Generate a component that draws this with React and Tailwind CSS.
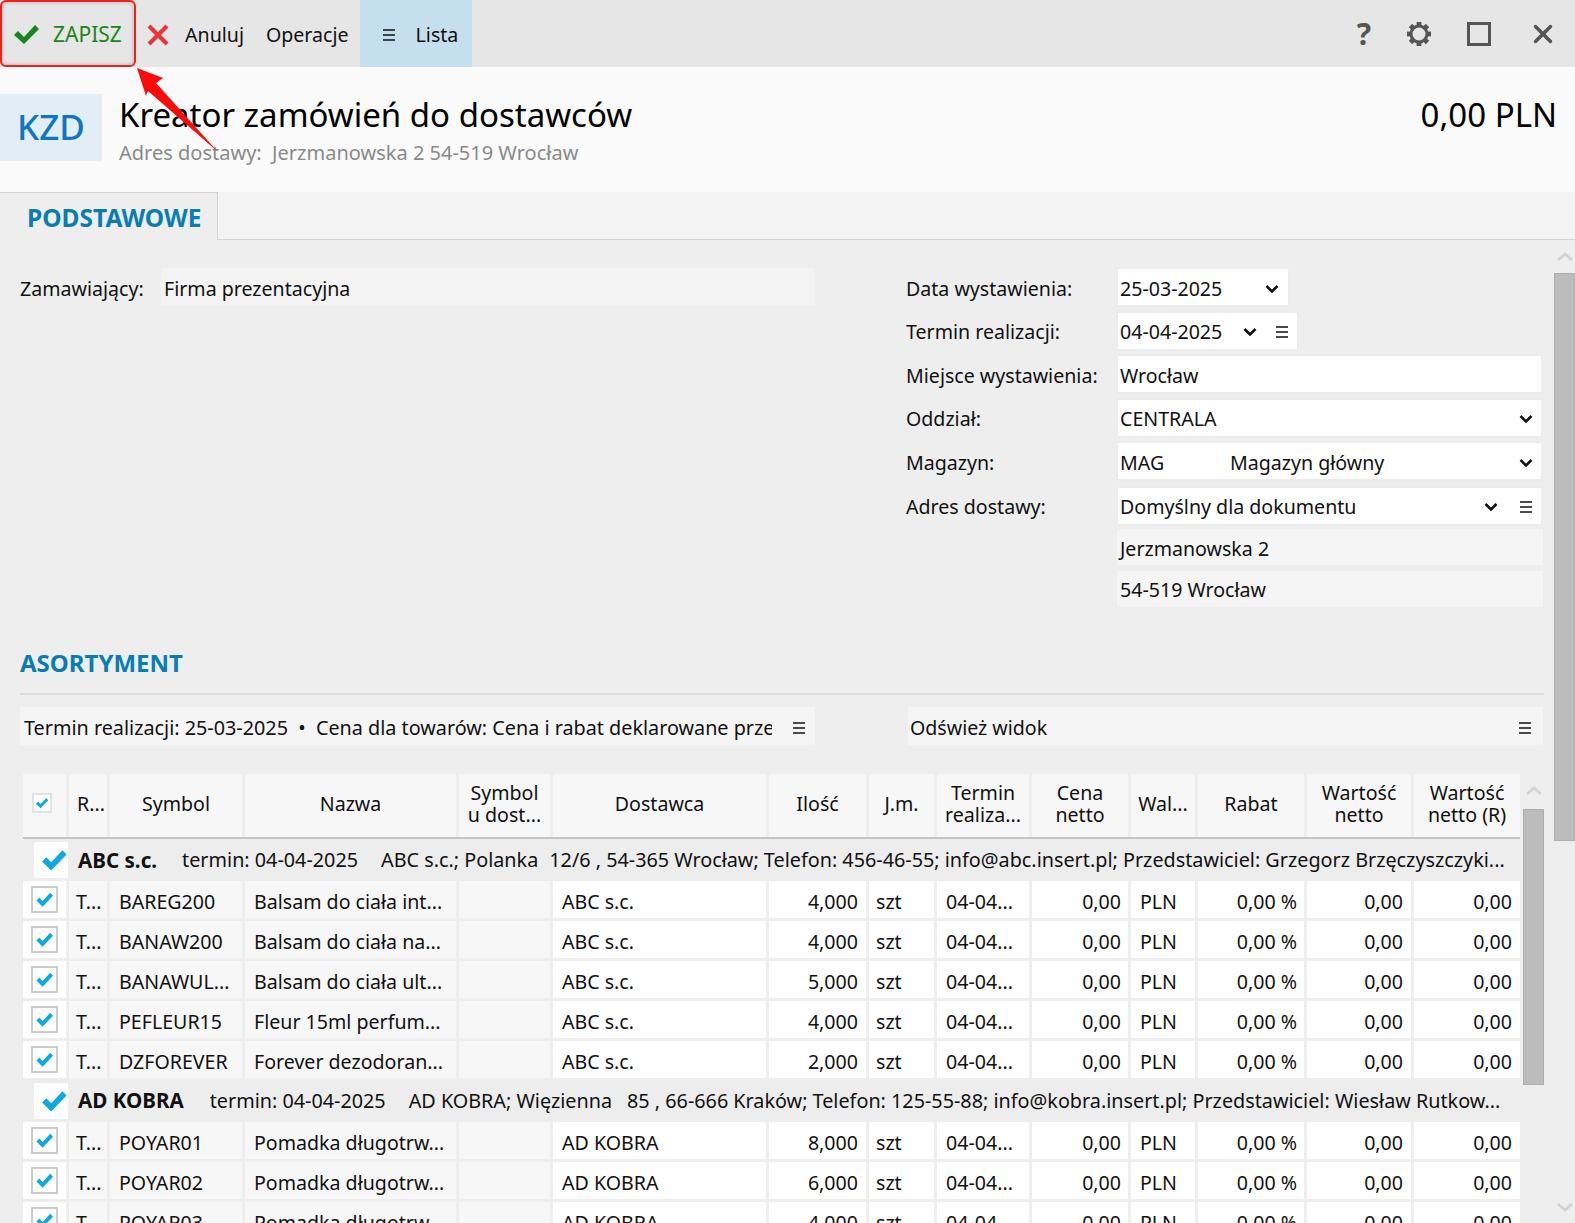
import { X } from 'lucide-react'

const kolommen = 'grid grid-cols-[43px_38px_132px_211px_91px_213px_97px_65px_92px_96px_64px_106px_104px_106px] gap-x-[3px]'

// Hamburger menu icoon
function Menu({ className = '' }) {
  return (
    <svg width="14" height="14" viewBox="0 0 14 14" className={className}>
      <path d="M1 2h12M1 7h12M1 12h12" stroke="#111" strokeWidth="1.6" />
    </svg>
  )
}

function Chevron({ className = '' }) {
  return (
    <svg width="14" height="10" viewBox="0 0 14 10" className={className}>
      <path d="M1.5 2l5.5 5.5L12.5 2" fill="none" stroke="#111" strokeWidth="2.6" />
    </svg>
  )
}

function Vink({ size = 20, className = '' }) {
  return (
    <svg width={size} height={size} viewBox="0 0 20 20" className={className}>
      <path d="M1.5 11l3-3 3.5 3.6L16 3l3 3-11 11.5z" fill="#0ea9e0" />
    </svg>
  )
}

// Tandwiel met acht tanden
function Tandwiel() {
  return (
    <svg width="28" height="28" viewBox="0 0 28 28" className="mr-[34px]">
      {[0, 45, 90, 135, 180, 225, 270, 315].map((hoek) => (
        <rect key={hoek} x="11.6" y="2" width="4.8" height="4.5" fill="#555" transform={`rotate(${hoek} 14 14)`} />
      ))}
      <circle cx="14" cy="14" r="8" fill="none" stroke="#555" strokeWidth="3" />
    </svg>
  )
}

function Rij({ label, children, className = '' }) {
  return (
    <div className={`flex items-center h-[40px] ${className}`}>
      <div className="w-[210px] shrink-0 pt-[3px]">{label}</div>
      {children}
    </div>
  )
}

function Veld({ children, className = 'w-[427px]' }) {
  return (
    <div className={`h-[40px] bg-white border-2 border-[#ececec] flex items-center pt-[3px] pl-[2px] pr-[8px] ${className}`}>
      {children}
    </div>
  )
}

function GroepRij({ naam, termin, adres, rest, className = 'h-[42px]', afstand = ['ml-[25px]', 'ml-[23px]', 'ml-[11px]'] }) {
  return (
    <div className={`flex items-center bg-[#ededed] w-[1497px] whitespace-nowrap overflow-hidden text-[19.8px] ${className}`}>
      <div className="ml-[11px] w-[34px] h-[36px] bg-white flex items-center justify-center shrink-0">
        <Vink size={28} className="ml-[6px]" />
      </div>
      <span className="font-bold text-[20.6px] ml-[10px]">{naam}</span>
      <span className={afstand[0]}>{termin}</span>
      <span className={afstand[1]}>{adres}</span>
      <span className={afstand[2]}>{rest}</span>
    </div>
  )
}

function TowarRij({ symbol, nazwa, dostawca, ilosc }) {
  const wit = 'bg-white h-full flex items-center pt-[4px]'
  const grijs = 'bg-[#f7f7f7] h-full flex items-center pt-[4px]'
  return (
    <div className={`${kolommen} h-[37px] mb-[3px] whitespace-nowrap`}>
      <div className="bg-white h-full flex items-center justify-center">
        <div className="w-[27px] h-[27px] border-2 border-[#cccccc] flex items-center justify-center">
          <Vink size={19} />
        </div>
      </div>
      <div className={`${grijs} pl-[7px]`}>T...</div>
      <div className={`${grijs} pl-[9px]`}>{symbol}</div>
      <div className={`${grijs} pl-[9px]`}>{nazwa}</div>
      <div className={grijs}></div>
      <div className={`${wit} pl-[9px]`}>{dostawca}</div>
      <div className={`${wit} justify-end pr-[8px]`}>{ilosc}</div>
      <div className={`${wit} pl-[7px]`}>szt</div>
      <div className={`${wit} pl-[9px]`}>04-04...</div>
      <div className={`${wit} justify-end pr-[7px]`}>0,00</div>
      <div className={`${wit} pl-[9px]`}>PLN</div>
      <div className={`${wit} justify-end pr-[7px]`}>0,00 %</div>
      <div className={`${wit} justify-end pr-[8px]`}>0,00</div>
      <div className={`${wit} justify-end pr-[8px]`}>0,00</div>
    </div>
  )
}

function Kop({ children, className = '' }) {
  return (
    <div className={`bg-[#f7f7f7] h-full flex items-center justify-center text-center leading-[22px] pb-[3px] ${className}`}>
      {children}
    </div>
  )
}

export default function App() {
  return (
    <div className="relative h-[1223px] w-[1575px] overflow-hidden bg-[#eeeeee] text-[19.6px] text-[#111] font-['Noto_Sans',sans-serif]">
      {/* Werkbalk */}
      <div className="h-[67px] bg-[#e6e6e6] flex items-stretch">
        <div className="w-[136px] h-[67px] border-2 border-[#f02020] rounded-[6px] flex items-center pl-[10px] shadow-[inset_0_0_4px_rgba(0,0,0,0.25)]">
          <svg width="28" height="22" viewBox="0 0 28 22">
            <path d="M2 12l4-4 6 6L23 2l4 4-15 15z" fill="#17861f" />
          </svg>
          <span className="ml-[13px] text-[21px] text-[#1c851c] pt-[2px]">ZAPISZ</span>
        </div>
        <div className="flex items-center ml-[10px] pt-[2px]">
          <svg width="24" height="24" viewBox="0 0 24 24">
            <path d="M3 3l18 18M21 3L3 21" stroke="#e8343c" strokeWidth="4.2" />
          </svg>
          <span className="ml-[15px]">Anuluj</span>
          <span className="ml-[22px]">Operacje</span>
        </div>
        <div className="ml-[11px] w-[112px] bg-[#c5dfef] flex items-center pl-[22px] pt-[2px]">
          <Menu />
          <span className="ml-[20px]">Lista</span>
        </div>
        <div className="ml-auto flex items-center text-[#555]">
          <span className="font-bold text-[30px] mr-[34px]">?</span>
          <Tandwiel />
          <div className="w-[24px] h-[24px] border-[3px] border-[#555] mr-[37px]"></div>
          <X size={30} strokeWidth={2.8} className="mr-[17px]" />
        </div>
      </div>

      {/* Kop van het document */}
      <div className="h-[125px] bg-[#fafafa] flex pt-[27px]">
        <div className="w-[102px] h-[67px] bg-[#e3edf5] flex items-center justify-center font-medium text-[#0f77bd] text-[35px]">KZD</div>
        <div className="ml-[17px] -mt-[1px]">
          <div className="text-[33px] leading-[44px] text-black">Kreator zamówień do dostawców</div>
          <div className="text-[20px] text-[#8a8a8a] leading-[28px] mt-[2px]">Adres dostawy:&nbsp; Jerzmanowska 2 54-519 Wrocław</div>
        </div>
        <div className="ml-auto mr-[18px] -mt-[1px] text-[33px] leading-[44px] text-black">0,00 PLN</div>
      </div>

      {/* Tabbladen */}
      <div className="h-[48px] bg-[#f3f3f3] border-b border-[#d4d4d4]">
        <div className="w-[218px] h-[48px] bg-[#eeeeee] border-t border-r border-[#d4d4d4] flex items-center pl-[27px] pt-[4px] font-bold text-[24.5px] text-[#0a7db0]">
          PODSTAWOWE
        </div>
      </div>

      <div className="flex">
        <div className="w-[1554px] pl-[20px]">
          {/* Formulier */}
          <div className="flex pt-[27px] h-[368px]">
            <div className="w-[795px] flex items-start mt-[1px]">
              <div className="w-[141px] h-[38px] flex items-center pt-[3px]">Zamawiający:</div>
              <div className="w-[654px] h-[38px] bg-[#f3f3f3] flex items-center pl-[3px] pt-[3px]">Firma prezentacyjna</div>
            </div>
            <div className="ml-[91px] w-[637px] flex flex-col gap-y-[3.5px]">
              <Rij label="Data wystawienia:">
                <Veld className="w-[174px] justify-between">25-03-2025<Chevron className="mr-[1px]" /></Veld>
              </Rij>
              <Rij label="Termin realizacji:">
                <Veld className="w-[183px] justify-between">04-04-2025<Chevron className="ml-[2px]" /><Menu /></Veld>
              </Rij>
              <Rij label="Miejsce wystawienia:">
                <Veld>Wrocław</Veld>
              </Rij>
              <Rij label="Oddział:">
                <Veld className="w-[427px] justify-between">CENTRALA<Chevron /></Veld>
              </Rij>
              <Rij label="Magazyn:">
                <Veld className="w-[427px]">
                  <span className="w-[110px]">MAG</span>
                  <span>Magazyn główny</span>
                  <Chevron className="ml-auto" />
                </Veld>
              </Rij>
              <Rij label="Adres dostawy:" className="mt-[1px]">
                <Veld className="w-[427px]">
                  Domyślny dla dokumentu
                  <Chevron className="ml-auto mr-[21px]" />
                  <Menu />
                </Veld>
              </Rij>
              <div className="ml-[211px] w-[426px] h-[36px] bg-[#f5f5f5] flex items-center pl-[3px] pt-[4px]">Jerzmanowska 2</div>
              <div className="ml-[211px] mt-[2.5px] w-[426px] h-[36px] bg-[#f5f5f5] flex items-center pl-[3px] pt-[1px]">54-519 Wrocław</div>
            </div>
          </div>

          {/* Asortyment */}
          <div className="h-[87px] mr-[10px] border-b-2 border-[#dcdcdc] flex items-center pt-[24px] font-bold text-[24px] text-[#0a7db0]">
            ASORTYMENT
          </div>
          <div className="flex mt-[12px] h-[38px]">
            <div className="w-[795px] bg-[#f5f5f5] flex items-center pl-[4px] pr-[9px] pt-[4px]">
              <span className="flex-1 whitespace-nowrap overflow-hidden text-[19.8px]">Termin realizacji: 25-03-2025 &nbsp;•&nbsp;&nbsp;Cena dla towarów: Cena i rabat deklarowane prze</span>
              <Menu className="ml-[20px]" />
            </div>
            <div className="ml-[93px] w-[635px] bg-[#f5f5f5] flex items-center pl-[2px] pr-[11px] pt-[4px] justify-between">
              Odśwież widok
              <Menu />
            </div>
          </div>

          {/* Tabel */}
          <div className="mt-[29px] ml-[3px] flex">
            <div className="w-[1497px]">
              <div className={`${kolommen} h-[65px] border-b-2 border-[#c4c4c4]`}>
                <Kop>
                  <div className="w-[20px] h-[20px] bg-white border-2 border-[#e2e2e2] flex items-center justify-center -mt-[3px] -ml-[6px]">
                    <Vink size={14} />
                  </div>
                </Kop>
                <Kop className="justify-start pl-[8px]">R...</Kop>
                <Kop>Symbol</Kop>
                <Kop>Nazwa</Kop>
                <Kop>Symbol<br />u dost...</Kop>
                <Kop>Dostawca</Kop>
                <Kop>Ilość</Kop>
                <Kop>J.m.</Kop>
                <Kop>Termin<br />realiza...</Kop>
                <Kop>Cena<br />netto</Kop>
                <Kop>Wal...</Kop>
                <Kop>Rabat</Kop>
                <Kop>Wartość<br />netto</Kop>
                <Kop>Wartość<br />netto (R)</Kop>
              </div>
              <GroepRij
                naam="ABC s.c."
                termin="termin: 04-04-2025"
                adres="ABC s.c.; Polanka"
                rest="12/6 , 54-365 Wrocław; Telefon: 456-46-55; info@abc.insert.pl; Przedstawiciel: Grzegorz Brzęczyszczyki..."
              />
              <TowarRij symbol="BAREG200" nazwa="Balsam do ciała int..." dostawca="ABC s.c." ilosc="4,000" />
              <TowarRij symbol="BANAW200" nazwa="Balsam do ciała na..." dostawca="ABC s.c." ilosc="4,000" />
              <TowarRij symbol="BANAWUL..." nazwa="Balsam do ciała ult..." dostawca="ABC s.c." ilosc="5,000" />
              <TowarRij symbol="PEFLEUR15" nazwa="Fleur 15ml perfum..." dostawca="ABC s.c." ilosc="4,000" />
              <TowarRij symbol="DZFOREVER" nazwa="Forever dezodoran..." dostawca="ABC s.c." ilosc="2,000" />
              <GroepRij
                naam="AD KOBRA"
                termin="termin: 04-04-2025"
                adres="AD KOBRA; Więzienna"
                rest="85 , 66-666 Kraków; Telefon: 125-55-88; info@kobra.insert.pl; Przedstawiciel: Wiesław Rutkow..."
                className="h-[41px] -mt-[1px] mb-[1px]"
                afstand={['ml-[26px]', 'ml-[23px]', 'ml-[15px]']}
              />
              <TowarRij symbol="POYAR01" nazwa="Pomadka długotrw..." dostawca="AD KOBRA" ilosc="8,000" />
              <TowarRij symbol="POYAR02" nazwa="Pomadka długotrw..." dostawca="AD KOBRA" ilosc="6,000" />
              <TowarRij symbol="POYAR03" nazwa="Pomadka długotrw..." dostawca="AD KOBRA" ilosc="4,000" />
            </div>
            {/* Binnenste scrollbalk */}
            <div className="ml-[3px] w-[21px] pt-[12px]">
              <svg width="16" height="10" viewBox="0 0 16 10" className="mx-auto">
                <path d="M1 8l7-6 7 6" fill="none" stroke="#d2d2d2" strokeWidth="2.6" />
              </svg>
              <div className="mt-[13px] h-[276px] bg-[#bcbcbc] border border-[#aeaeae]"></div>
            </div>
          </div>
        </div>

        {/* Buitenste scrollbalk */}
        <div className="w-[21px] flex flex-col items-center pt-[12px] h-[983px]">
          <svg width="16" height="10" viewBox="0 0 16 10">
            <path d="M1 8l7-6 7 6" fill="none" stroke="#d2d2d2" strokeWidth="2.6" />
          </svg>
          <div className="mt-[11px] h-[568px] w-full bg-[#bcbcbc] border border-[#aeaeae]"></div>
          <svg width="16" height="10" viewBox="0 0 16 10" className="mt-auto mb-[11px]">
            <path d="M1 2l7 6 7-6" fill="none" stroke="#d2d2d2" strokeWidth="2.6" />
          </svg>
        </div>
      </div>

      {/* Rode pijl bovenop de schermafbeelding */}
      <svg width="100" height="100" viewBox="0 0 100 100" className="absolute left-[130px] top-[60px] pointer-events-none">
        <path d="M7 8l26 10-7 5 62 69L18 31l-2 5z" fill="#fb0b0b" />
      </svg>
    </div>
  )
}
